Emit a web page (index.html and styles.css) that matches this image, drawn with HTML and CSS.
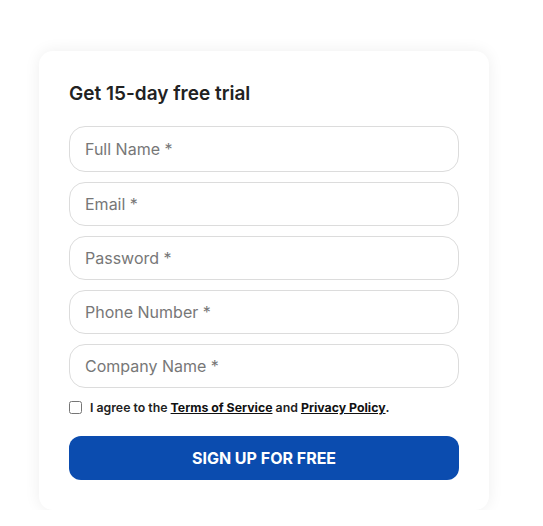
FILE: index.html
```html
<!DOCTYPE html>
<html lang="en">
<head>
  <meta charset="UTF-8">
  <meta name="viewport" content="width=device-width, initial-scale=1.0">
  <title>Free trial</title>
  <link rel="stylesheet" href="styles.css">
</head>
<body>
  <div class="page">
    <form class="trial-card">
      <h2 class="trial-title">Get 15-day free trial</h2>

      <input class="field" type="text" placeholder="Full Name *">
      <input class="field" type="email" placeholder="Email *">
      <input class="field" type="password" placeholder="Password *">
      <input class="field" type="tel" placeholder="Phone Number *">
      <input class="field" type="text" placeholder="Company Name *">

      <label class="agree">
        <input type="checkbox">
        <span>I agree to the <a href="#">Terms of Service</a> and <a href="#">Privacy Policy</a>.</span>
      </label>

      <button class="submit" type="button">SIGN UP FOR FREE</button>
    </form>
  </div>
</body>
</html>
```

FILE: styles.css
```css
/* CSS */
body {
  margin: 0;
  padding: 0;
  font-family: 'Inter', 'Liberation Sans', sans-serif;
  background: #fff;
  color: #222;
}

.page {
  padding: 51px 0 0 39px;
}

.trial-card {
  width: 390px;
  padding: 30px;
  background: #fff;
  border-radius: 14px;
  box-shadow: 0 0 16px rgba(0, 0, 0, 0.07);
  display: flex;
  flex-direction: column;
}

.trial-title {
  margin: 0 0 20px;
  padding-top: 1px;
  font-size: 19px;
  font-weight: 600;
  color: #222;
  line-height: 24px;
}

.field {
  box-sizing: border-box;
  height: 44px;
  margin-bottom: 10px;
  padding: 0 15px;
  border: 1px solid #dcdcdc;
  border-radius: 16px;
  font-family: inherit;
  font-size: 16px;
  color: #333;
  outline: none;
}

.field:first-of-type {
  height: 46px;
}

.field::placeholder {
  color: #777;
}

.agree {
  display: flex;
  align-items: center;
  gap: 8px;
  margin-top: 2px;
  font-size: 12.3px;
  font-weight: 600;
  color: #222;
}

.agree input {
  margin: 0;
  width: 13px;
  height: 13px;
}

.agree a {
  color: #111;
  font-weight: 700;
  text-decoration: underline;
}

.submit {
  margin-top: 21px;
  height: 44px;
  border: none;
  border-radius: 12px;
  background: #0b4caf;
  color: #fff;
  font-family: inherit;
  font-size: 16px;
  font-weight: 700;
  cursor: pointer;
}
```
